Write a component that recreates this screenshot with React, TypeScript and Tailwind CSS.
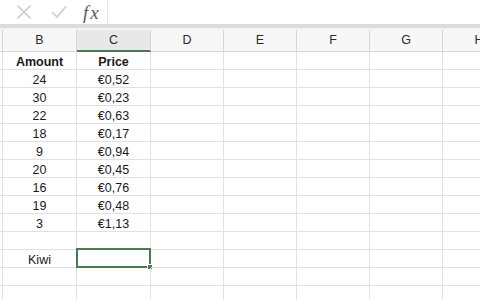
const columns = [
  { label: '', width: 'w-[3px]' },
  { label: 'B', width: 'w-[74px]' },
  { label: 'C', width: 'w-[74px]' },
  { label: 'D', width: 'w-[73px]' },
  { label: 'E', width: 'w-[73px]' },
  { label: 'F', width: 'w-[73px]' },
  { label: 'G', width: 'w-[73px]' },
  { label: 'H', width: 'w-[73px]' },
];

const rows: [string, string][] = [
  ['24', '€0,52'],
  ['30', '€0,23'],
  ['22', '€0,63'],
  ['18', '€0,17'],
  ['9', '€0,94'],
  ['20', '€0,45'],
  ['16', '€0,76'],
  ['19', '€0,48'],
  ['3', '€1,13'],
  ['', ''],
  ['Kiwi', ''],
  ['', ''],
  ['', ''],
];

export default function App() {
  return (
    <div className="w-[480px] h-[300px] overflow-hidden bg-white font-['Liberation_Sans',sans-serif] text-[12.5px] text-[#1a1a1a]">
      {/* Formula bar */}
      <div className="h-[24px] flex items-center bg-white">
        <div className="w-[108px] h-[22px] flex items-center border-r border-[#e3e3e3]">
          <svg width="16" height="16" viewBox="0 0 16 16" className="ml-[16px]">
            <path d="M1.5 1.5 L14.5 14.5 M14.5 1.5 L1.5 14.5" stroke="#cccccc" strokeWidth="1.6" fill="none" />
          </svg>
          <svg width="16" height="14" viewBox="0 0 16 14" className="ml-[19px]">
            <path d="M1 7 L6 12 L15 1.5" stroke="#cccccc" strokeWidth="1.6" fill="none" />
          </svg>
          <span className="ml-[16px] font-['Liberation_Serif',serif] italic text-[19px] text-[#5a5a5a] leading-none tracking-[2px]">
            fx
          </span>
        </div>
      </div>
      <div className="h-[4px] bg-[#dcdcdc]" />
      <div className="h-[2px] bg-[#f4f4f4]" />

      {/* Column headers */}
      <div className="flex h-[22px]">
        {columns.map((col) => (
          <div
            key={col.label || 'A'}
            className={`${col.width} shrink-0 flex items-center justify-center border-r border-[#d6d6d6] text-[12.5px] text-[#2b2b2b] ${
              col.label === 'C'
                ? 'bg-[#e8e8e8] border-b-2 border-b-[#4a7a55]'
                : 'bg-[#f7f7f7] border-b border-b-[#d6d6d6]'
            }`}
          >
            {col.label}
          </div>
        ))}
      </div>

      {/* Title row */}
      <div className="flex h-[18px]">
        {columns.map((col, i) => (
          <div
            key={i}
            className={`${col.width} shrink-0 flex items-center justify-center pt-[3px] border-r border-b border-[#e1e1e1] font-bold`}
          >
            {i === 1 ? 'Amount' : i === 2 ? 'Price' : ''}
          </div>
        ))}
      </div>

      {rows.map(([amount, price], r) => (
        <div key={r} className="flex h-[18px]">
          {columns.map((col, i) => (
            <div
              key={i}
              className={`${col.width} shrink-0 relative flex items-center justify-center pt-[3px] border-r border-b border-[#e1e1e1]`}
            >
              {i === 1 ? amount : i === 2 ? price : ''}
              {i === 2 && amount === 'Kiwi' && (
                <div className="absolute -left-px -top-[2px] -right-px -bottom-px border-2 border-[#4a7a55]">
                  <div className="absolute -right-[4px] -bottom-[4px] w-[6px] h-[6px] bg-[#4a7a55] border border-white" />
                </div>
              )}
            </div>
          ))}
        </div>
      ))}
    </div>
  );
}
